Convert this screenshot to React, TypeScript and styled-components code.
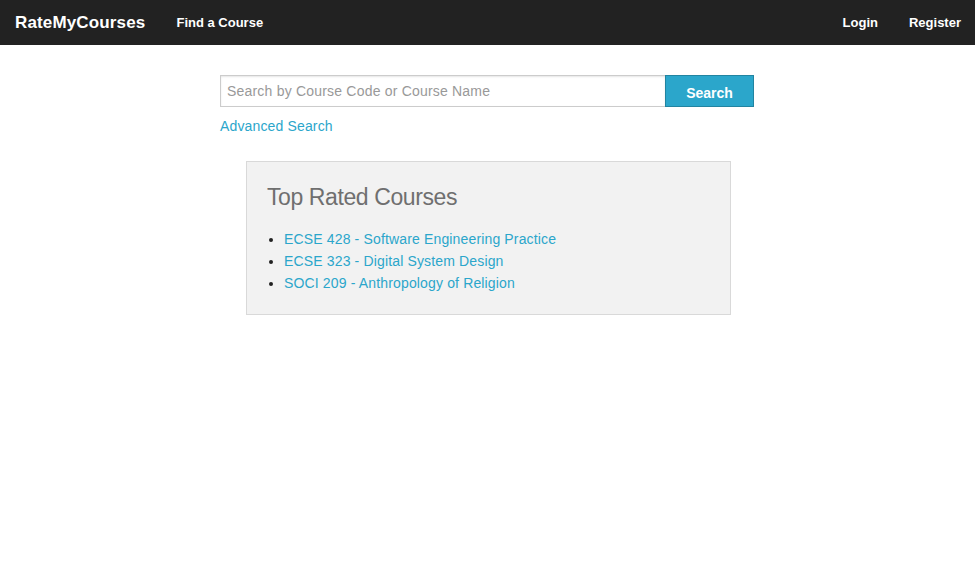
import React from "react";
import styled, { createGlobalStyle } from "styled-components";

const Global = createGlobalStyle`
  html, body { margin: 0; padding: 0; background: #fff; }
  body { font-family: "Liberation Sans", Arial, sans-serif; color: #222; font-size: 14px; }
  * { box-sizing: border-box; }
`;

const TopBar = styled.nav`
  height: 45px;
  background: #222;
  display: flex;
  align-items: center;
  justify-content: space-between;
  padding: 0 14px 0 15px;
`;

const Side = styled.div<{ $gap: number }>`
  display: flex;
  align-items: center;
  gap: ${(p) => p.$gap}px;
`;

const Brand = styled.a`
  color: #fff;
  font-weight: bold;
  font-size: 17px;
  text-decoration: none;
  letter-spacing: 0.15px;
`;

const NavLink = styled.a`
  color: #fff;
  font-weight: bold;
  font-size: 13px;
  text-decoration: none;
`;

const Main = styled.main`
  display: flex;
  flex-direction: column;
  align-items: center;
  padding-top: 30px;
`;

const SearchBlock = styled.div`
  width: 534px;
  margin-right: 1px;
`;

const SearchRow = styled.form`
  display: flex;
  height: 32px;
`;

const SearchInput = styled.input`
  flex: 1;
  height: 32px;
  border: 1px solid #ccc;
  border-right: none;
  box-shadow: inset 0 1px 2px rgba(0, 0, 0, 0.1);
  padding: 0 6px;
  font-family: "Liberation Sans", Arial, sans-serif;
  font-size: 14px;
  letter-spacing: 0.2px;
  color: #222;
  outline: none;
  &::placeholder { color: #999; }
`;

const SearchButton = styled.button`
  width: 89px;
  height: 32px;
  background: #2ba6cb;
  border: 1px solid #2284a1;
  color: #fff;
  font-weight: bold;
  font-size: 14px;
  font-family: "Liberation Sans", Arial, sans-serif;
  padding: 3px 0 0;
  cursor: pointer;
`;

const Link = styled.a`
  color: #2ba6cb;
  text-decoration: none;
  font-size: 14px;
  letter-spacing: 0.15px;
`;

const AdvancedWrap = styled.div`
  margin-top: 11px;
  line-height: 17px;
`;

const Panel = styled.section`
  width: 485px;
  margin-top: 26px;
  margin-left: 2px;
  background: #f2f2f2;
  border: 1px solid #d9d9d9;
  padding: 21px 20px 20px;
`;

const Heading = styled.h4`
  margin: 0 0 17px;
  font-size: 23px;
  font-weight: normal;
  color: #6f6f6f;
  line-height: 28px;
  letter-spacing: -0.4px;
`;

const List = styled.ul`
  margin: 0;
  padding-left: 17px;
  line-height: 22px;
  font-size: 14px;
  li::marker { color: #222; }
`;

const courses = [
  "ECSE 428 - Software Engineering Practice",
  "ECSE 323 - Digital System Design",
  "SOCI 209 - Anthropology of Religion",
];

export default function App() {
  return (
    <>
      <Global />
      <TopBar>
        <Side $gap={31}>
          <Brand href="#">RateMyCourses</Brand>
          <NavLink href="#">Find a Course</NavLink>
        </Side>
        <Side $gap={31}>
          <NavLink href="#">Login</NavLink>
          <NavLink href="#">Register</NavLink>
        </Side>
      </TopBar>
      <Main>
        <SearchBlock>
          <SearchRow onSubmit={(e) => e.preventDefault()}>
            <SearchInput placeholder="Search by Course Code or Course Name" />
            <SearchButton type="submit">Search</SearchButton>
          </SearchRow>
          <AdvancedWrap>
            <Link href="#">Advanced Search</Link>
          </AdvancedWrap>
        </SearchBlock>
        <Panel>
          <Heading>Top Rated Courses</Heading>
          <List>
            {courses.map((c) => (
              <li key={c}>
                <Link href="#">{c}</Link>
              </li>
            ))}
          </List>
        </Panel>
      </Main>
    </>
  );
}
